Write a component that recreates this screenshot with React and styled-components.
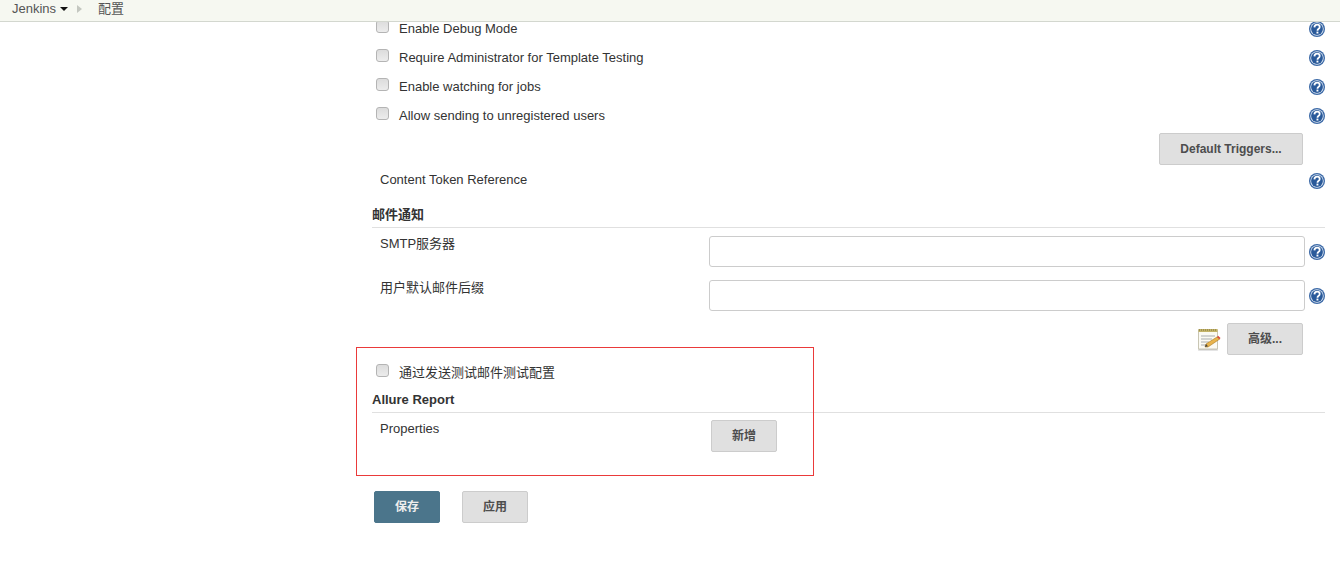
import React from "react";
import styled, { createGlobalStyle } from "styled-components";

const Global = createGlobalStyle`
  html, body { margin: 0; padding: 0; background: #fff; }
  body { font-family: "Liberation Sans", "Noto Sans CJK SC", sans-serif; font-size: 13px; color: #333; }
`;
const Page = styled.div`
  position: relative;
  width: 1340px;
  height: 577px;
  overflow: hidden;
`;
const Breadcrumbs = styled.nav`
  position: relative;
  z-index: 2;
  display: flex;
  align-items: center;
  height: 22px;
  padding: 0 0 4px 12px;
  box-sizing: border-box;
  background: #f6f8f1;
  border-bottom: 1px solid #d3d7cf;
  color: #555;
  font-size: 13px;
  line-height: 16px;
`;
const Caret = styled.span`
  width: 0; height: 0;
  margin-left: 4px;
  border-left: 4px solid transparent;
  border-right: 4px solid transparent;
  border-top: 4px solid #111;
`;
const Chevron = styled.span`
  width: 0; height: 0;
  margin: 0 16px 0 9px;
  border-top: 4px solid transparent;
  border-bottom: 4px solid transparent;
  border-left: 5px solid #c4c7c0;
`;
const Content = styled.main`
  margin: -8px 15px 0 372px;
`;
const CheckRow = styled.label`
  display: flex;
  align-items: center;
  height: 29px;
  padding-left: 4px;
  margin-top: ${p => p.$top || 0}px;
`;
const Box = styled.input.attrs({ type: "checkbox" })`
  appearance: none;
  box-sizing: border-box;
  width: 13px;
  height: 13px;
  margin: -4px 10px 0 0;
  background: linear-gradient(#dcdcdc, #ececec);
  border: 1px solid #b4b4b4;
  border-radius: 3px;
`;
const Label = styled.span`
  flex: 1;
  margin-top: ${p => (p.$raise ? "-2px" : "0")};
`;
const Help = styled.svg.attrs({ viewBox: "0 0 16 16", width: 16, height: 16 })`
  flex: none;
  display: block;
`;
const HelpIcon = ({ className }) => (
  <Help className={className}>
    <circle cx="8" cy="8" r="8" fill="#3a68a6" />
    <circle cx="8" cy="8" r="6.7" fill="#dfe8f3" />
    <circle cx="8" cy="8" r="5.9" fill="#2a5a9a" />
    <path d="M5.4 6.4C5.5 4.6 6.7 3.6 8.1 3.6c1.6 0 2.6 1 2.6 2.3 0 1.1-.6 1.6-1.3 2.1-.7.5-.9.9-.9 1.7" fill="none" stroke="#fff" strokeWidth="1.8" />
    <rect x="7.5" y="10.6" width="1.9" height="1.9" fill="#fff" />
  </Help>
);
const RowHelp = styled(HelpIcon)`
  margin-left: auto;
`;
const ButtonRow = styled.div`
  display: flex;
  justify-content: flex-end;
  align-items: center;
  gap: 6px;
  margin-top: ${p => p.$top || 0}px;
  padding-right: 22px;
`;
const Button = styled.button`
  box-sizing: border-box;
  height: 32px;
  min-width: 66px;
  margin-left: ${p => p.$indent || 0}px;
  padding: 0 20px ${p => (p.$cjk ? 3 : 1)}px;
  background: ${p => (p.$primary ? "#4b758b" : "#e0e0e0")};
  border: 1px solid ${p => (p.$primary ? "#4b758b" : "#ccc")};
  border-radius: 2px;
  color: ${p => (p.$primary ? "#eee" : "#4d4d4d")};
  font: bold 12px "Liberation Sans", "Noto Sans CJK SC", sans-serif;
  white-space: nowrap;
`;
const WideButton = styled(Button)`
  width: 144px;
  padding-left: 0;
  padding-right: 0;
`;
const TokenRow = styled.div`
  display: flex;
  align-items: flex-start;
  height: 29px;
  margin-top: 6px;
  padding-left: 8px;
  line-height: 17px;
  ${Help} { margin-top: 2px; }
`;
const Section = styled.h3`
  margin: ${p => p.$top || 0}px 0 0;
  height: 28px;
  box-sizing: border-box;
  border-bottom: 1px solid #e0e0e0;
  font-size: 13px;
  font-weight: bold;
  line-height: 18px;
  padding-top: 6px;
`;
const FieldRow = styled.div`
  display: grid;
  grid-template-columns: 337px 596px 20px;
  height: 44px;
  align-items: start;
`;
const FieldLabel = styled.div`
  padding: 7px 0 0 8px;
  line-height: 17px;
`;
const TextInput = styled.input`
  box-sizing: border-box;
  width: 596px;
  height: 31px;
  margin-top: 8px;
  background: #fff;
  border: 1px solid #ccc;
  border-radius: 3px;
`;
const FieldHelp = styled(HelpIcon)`
  margin: 16px 0 0 4px;
`;
const ButtonCell = styled.div`
  padding-top: 7px;
`;
const Actions = styled.div`
  display: flex;
  gap: 22px;
  margin: 34px 0 0 2px;
`;
const Annotation = styled.div`
  position: absolute;
  left: 356px;
  top: 347px;
  width: 456px;
  height: 127px;
  border: 1px solid #ea3a3a;
  pointer-events: none;
`;
const Note = () => (
  <svg width="24" height="24" viewBox="0 0 24 24">
    <path d="M1 23.5h20l-1-1.5H2z" fill="#c9c9c9" />
    <rect x="1.5" y="3" width="19" height="19" fill="#fbfaf3" stroke="#c9c6b4" />
    <rect x="1.5" y="2" width="19" height="3" fill="#c4b468" />
    <path d="M2 3h18" stroke="#7a6f3a" strokeDasharray="1 1" />
    <path d="M4 9h14M4 12h11M4 15h8M4 18h6" stroke="#a9adb0" strokeWidth="1" />
    <path d="M8 20l1-3L20 10l2.5 2.2L11 20z" fill="#e9b44c" stroke="#a9791f" strokeWidth=".6" />
    <path d="M20 10l2.5 2.2 1-1.2-2.4-2.2z" fill="#d9483b" />
    <path d="M8 20l1-3 2 2.2z" fill="#444" />
  </svg>
);

const checks = ["Enable Debug Mode", "Require Administrator for Template Testing", "Enable watching for jobs", "Allow sending to unregistered users"];

export default function App() {
  return (
    <Page>
      <Global />
      <Breadcrumbs>
        Jenkins<Caret /><Chevron />配置
      </Breadcrumbs>
      <Content>
        {checks.map(c => (
          <CheckRow key={c}><Box /><Label>{c}</Label><RowHelp /></CheckRow>
        ))}
        <ButtonRow $top={3}><WideButton>Default Triggers...</WideButton></ButtonRow>
        <TokenRow>Content Token Reference<RowHelp /></TokenRow>
        <Section>邮件通知</Section>
        <FieldRow><FieldLabel>SMTP服务器</FieldLabel><TextInput /><FieldHelp /></FieldRow>
        <FieldRow><FieldLabel>用户默认邮件后缀</FieldLabel><TextInput /><FieldHelp /></FieldRow>
        <ButtonRow $top={7}><Note /><Button $cjk>高级...</Button></ButtonRow>
        <CheckRow $top={3}><Box /><Label $raise>通过发送测试邮件测试配置</Label></CheckRow>
        <Section $top={-2}>Allure Report</Section>
        <FieldRow>
          <FieldLabel>Properties</FieldLabel>
          <ButtonCell><Button $cjk $indent={2}>新增</Button></ButtonCell>
        </FieldRow>
        <Actions><Button $cjk $primary>保存</Button><Button $cjk>应用</Button></Actions>
      </Content>
      <Annotation />
    </Page>
  );
}
